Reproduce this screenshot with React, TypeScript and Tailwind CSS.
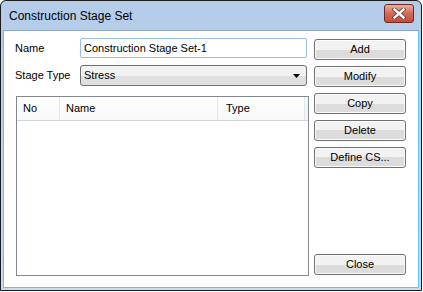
import React from 'react';

const font = { fontFamily: '"Liberation Sans", Arial, sans-serif' };

const btn =
  'h-[21px] w-[92px] rounded-[3px] border border-[#707070] bg-gradient-to-b from-[#f2f2f2] from-50% to-[#dcdcdc] to-50% text-[11px] text-black flex items-center justify-center shadow-[inset_0_0_0_1px_#fcfcfc]';

const CloseGlyph = () => (
  <svg width="14" height="11" viewBox="0 0 14 11">
    <path
      d="M2.5 1.5 L11.5 9.5 M11.5 1.5 L2.5 9.5"
      stroke="#6a3a36"
      strokeWidth="4.2"
      strokeLinecap="square"
    />
    <path d="M2.5 1.5 L11.5 9.5 M11.5 1.5 L2.5 9.5" stroke="#ffffff" strokeWidth="2.4" strokeLinecap="square" />
  </svg>
);

const ListHeader = () => (
  <div className="flex h-[24px] border-b border-[#d5d5d5] bg-gradient-to-b from-white to-[#f7f8fa] text-[11px] text-black">
    <div className="w-[43px] pl-[6px] flex items-center border-r border-[#e3e7ec]">No</div>
    <div className="w-[158px] pl-[6px] flex items-center border-r border-[#e3e7ec]">Name</div>
    <div className="w-[87px] pl-[8px] flex items-center border-r border-[#e3e7ec]">Type</div>
    <div className="flex-1 bg-[#f4f5f7]" />
  </div>
);

export default function App() {
  const buttons = ['Add', 'Modify', 'Copy', 'Delete', 'Define CS...'];

  return (
    <div className="w-[423px] h-[292px] bg-white" style={font}>
      <div className="w-[422px] h-[291px] flex flex-col rounded-t-[6px] border border-[#1c1c1c] bg-gradient-to-b from-[#b4cce8] via-[#bdd3ec] to-[#c6daf0]">
        {/* title bar */}
        <div className="h-[29px] flex items-center justify-between pl-[8px] pr-[7px]">
          <span className="text-[12px] text-black">Construction Stage Set</span>
          <div className="mb-[4px] h-[19px] w-[30px] rounded-[3px] border border-[#6e2a22] bg-gradient-to-b from-[#eab0a0] via-[#d46a56] to-[#c84a36] flex items-center justify-center">
            <CloseGlyph />
          </div>
        </div>

        {/* client area */}
        <div className="flex-1 mx-[2px] mb-[2px] border border-[#5fc4ec] border-t-[#8da6c4] bg-white flex pl-[12px] pt-[7px]">
          <div className="w-[293px] flex flex-col">
            <div className="flex items-center h-[20px]">
              <span className="w-[65px] text-[11px] text-black -ml-[1px]">Name</span>
              <div className="w-[227px] h-[20px] rounded-[2px] border border-[#96bde6] flex items-center pl-[3px] text-[11px] text-black">
                Construction Stage Set-1
              </div>
            </div>
            <div className="flex items-center h-[21px] mt-[7px]">
              <span className="w-[65px] text-[11px] text-black -ml-[1px]">Stage Type</span>
              <div className="w-[227px] h-[21px] rounded-[3px] border border-[#707070] bg-gradient-to-b from-[#f2f2f2] from-50% to-[#e0e0e0] to-50% flex items-center justify-between pl-[3px] pr-[6px] text-[11px] text-black">
                <span>Stress</span>
                <svg width="7" height="4" viewBox="0 0 7 4">
                  <path d="M0 0 H7 L3.5 4 Z" fill="#000" />
                </svg>
              </div>
            </div>
            <div className="mt-[10px] h-[180px] w-[293px] border border-[#828790] bg-white">
              <ListHeader />
            </div>
          </div>

          <div className="ml-[5px] flex flex-col pt-[1px] pb-[12px]">
            <div className="flex flex-col gap-[6px]">
              {buttons.map((b) => (
                <div key={b} className={btn}>
                  {b}
                </div>
              ))}
            </div>
            <div className="flex-1" />
            <div className={btn}>Close</div>
          </div>
        </div>
      </div>
    </div>
  );
}
